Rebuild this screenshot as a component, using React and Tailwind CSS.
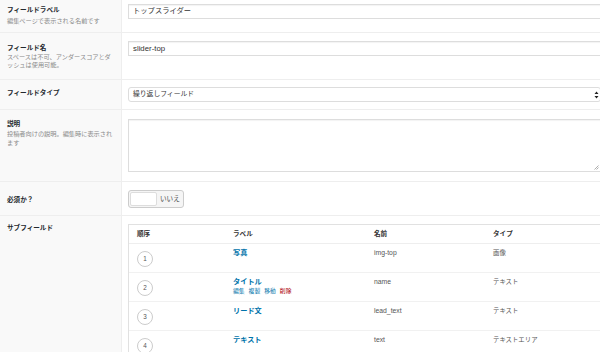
const rows = [
  { n: 1, label: "写真", name: "img-top", type: "画像" },
  { n: 2, label: "タイトル", name: "name", type: "テキスト", actions: true },
  { n: 3, label: "リード文", name: "lead_text", type: "テキスト" },
  { n: 4, label: "テキスト", name: "text", type: "テキストエリア" },
];

const Label = ({ title, sub }) => (
  <div>
    <div className="text-[6.6px] leading-[9px] font-bold text-[#23282d]">{title}</div>
    {sub && <div className="mt-[3px] text-[6.2px] leading-[8.5px] text-[#8a8a8a]">{sub}</div>}
  </div>
);

const Row = ({ h, lpt, rpt, left, children }) => (
  <div className={`flex border-b border-[#eee] ${h}`}>
    <div className={`w-[122px] shrink-0 bg-[#f9f9f9] border-r border-[#eee] pl-[7px] pr-[8px] ${lpt}`}>{left}</div>
    <div className={`flex-1 pl-[6px] ${rpt}`}>{children}</div>
  </div>
);

export default function App() {
  return (
    <div className="w-[600px] h-[352px] overflow-hidden bg-white font-['Liberation_Sans','Noto_Sans_CJK_JP',sans-serif]">
      <Row h="h-[33px]" lpt="pt-[5px]" rpt="pt-[4px]" left={<Label title="フィールドラベル" sub="編集ページで表示される名前です" />}>
        <div className="h-[15px] mr-[-2px] border border-[#ddd] shadow-[inset_0_1px_1px_rgba(0,0,0,0.05)] flex items-center pl-[4px] text-[7.3px] text-[#333]">
          トップスライダー
        </div>
      </Row>
      <Row h="h-[47px]" lpt="pt-[10px]" rpt="pt-[8px]" left={
        <div>
          <div className="text-[6.6px] leading-[9px] font-bold text-[#23282d]">フィールド名</div>
          <div className="mt-[1px] text-[6.2px] leading-[8px] text-[#8a8a8a]">スペースは不可、アンダースコアとダッシュは使用可能。</div>
        </div>
      }>
        <div className="h-[15px] mr-[-2px] border border-[#ddd] shadow-[inset_0_1px_1px_rgba(0,0,0,0.05)] flex items-center pl-[4px] text-[7.8px] text-[#333]">
          slider-top
        </div>
      </Row>
      <Row h="h-[30px]" lpt="pt-[8px]" rpt="pt-[7px]" left={<Label title="フィールドタイプ" />}>
        <div className="h-[15px] mr-[-1px] border border-[#ddd] rounded-[3px] bg-white flex items-center justify-between pl-[4px] pr-[1px] text-[6.8px] text-[#333]">
          <span>繰り返しフィールド</span>
          <svg width="5" height="8" viewBox="0 0 5 8">
            <path d="M2.5 0.5 L4.5 3 L0.5 3 Z M2.5 7.5 L4.5 5 L0.5 5 Z" fill="#222" />
          </svg>
        </div>
      </Row>
      <Row h="h-[72px]" lpt="pt-[9px]" rpt="pt-[9px]" left={
        <div>
          <div className="text-[6.6px] leading-[9px] font-bold text-[#23282d]">説明</div>
          <div className="mt-[1px] text-[6.2px] leading-[9px] text-[#8a8a8a]">投稿者向けの説明。編集時に表示されます</div>
        </div>
      }>
        <div className="relative h-[53px] mr-[-2px] border border-[#ddd] shadow-[inset_0_1px_1px_rgba(0,0,0,0.05)]">
          <svg className="absolute right-[2px] bottom-[1px]" width="5" height="5" viewBox="0 0 5 5">
            <path d="M4.5 0.5 L0.5 4.5 M4.5 2.5 L2.5 4.5" stroke="#999" strokeWidth="0.8" />
          </svg>
        </div>
      </Row>
      <Row h="h-[34px]" lpt="pt-[12.5px]" rpt="pt-[8px]" left={<Label title="必須か？" />}>
        <div className="w-[56px] h-[18px] border border-[#ccc] rounded-[3px] bg-[#f5f5f5] flex items-center pl-[1px]">
          <div className="w-[27px] h-[14px] bg-white border border-[#ddd] rounded-[2px]"></div>
          <span className="ml-[3px] text-[6.6px] text-[#444]">いいえ</span>
        </div>
      </Row>
      <div className="flex h-[140px]">
        <div className="w-[122px] shrink-0 bg-[#f9f9f9] border-r border-[#eee] pl-[7px] pt-[6.5px]">
          <Label title="サブフィールド" />
        </div>
        <div className="flex-1 pl-[6px] pt-[8px]">
          <div className="mr-[-3px] border border-[#e1e1e1] bg-white">
            <div className="flex h-[19px] items-center border-b border-[#eee] text-[6.6px] font-bold text-[#333]">
              <div className="w-[95px] pl-[8px]">順序</div>
              <div className="w-[141px] pl-[9px]">ラベル</div>
              <div className="w-[119px] pl-[9px]">名前</div>
              <div className="flex-1 pl-[9px]">タイプ</div>
            </div>
            {rows.map((r) => (
              <div key={r.n} className="flex h-[29px] border-b border-[#f1f1f1]">
                <div className="w-[95px] pl-[8px] flex items-center pt-[2px]">
                  <div className="w-[16px] h-[16px] rounded-full border border-[#ccc] flex items-center justify-center text-[6.3px] text-[#555]">
                    {r.n}
                  </div>
                </div>
                <div className="w-[141px] pl-[9px] pt-[4px]">
                  <div className="text-[7.2px] leading-[10px] font-bold text-[#0073aa]">{r.label}</div>
                  {r.actions && (
                    <div className="flex gap-[4px] text-[5.8px] leading-[8px] text-[#0073aa]">
                      <span>編集</span>
                      <span>複製</span>
                      <span>移動</span>
                      <span className="text-[#a00]">削除</span>
                    </div>
                  )}
                </div>
                <div className="w-[119px] pl-[9px] pt-[5px] text-[6.8px] leading-[8px] text-[#555]">{r.name}</div>
                <div className="flex-1 pl-[9px] pt-[5px] text-[6.4px] leading-[8px] text-[#555]">{r.type}</div>
              </div>
            ))}
          </div>
        </div>
      </div>
    </div>
  );
}
